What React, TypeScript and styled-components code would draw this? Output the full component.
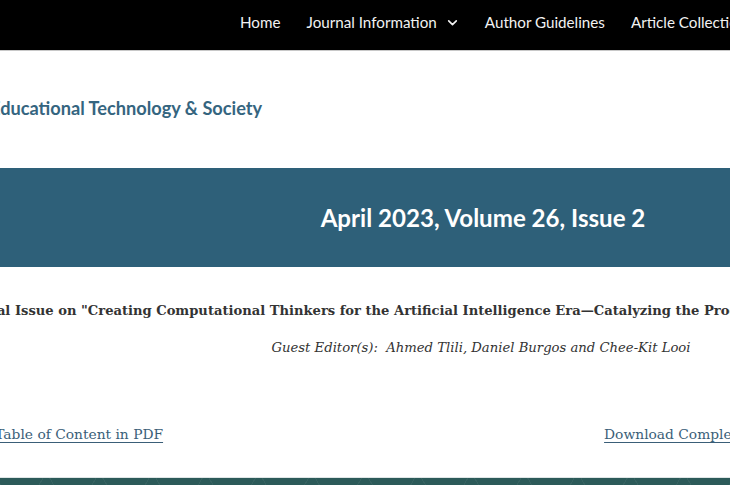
import styled, { createGlobalStyle } from 'styled-components';

const navItems = ['Home', 'Journal Information', 'Author Guidelines', 'Article Collections', 'Archives'];

const GlobalStyle = createGlobalStyle`
  html, body {
    margin: 0;
    padding: 0;
    background: #ffffff;
    overflow: hidden;
  }
  body {
    width: 730px;
    height: 485px;
  }
`;

const Page = styled.div`
  width: 730px;
  height: 485px;
  overflow: hidden;
  display: flex;
  flex-direction: column;
`;

const NavBar = styled.nav`
  flex-shrink: 0;
  height: 51px;
  box-sizing: border-box;
  padding: 0 0 6px 240px;
  background: #000000;
  border-bottom: 1px solid #c8c8c8;
  display: flex;
  align-items: center;
  gap: 26px;
  white-space: nowrap;
`;

const NavLink = styled.a`
  display: inline-flex;
  align-items: center;
  gap: 9px;
  color: #f2f2f2;
  font-family: Lato, "Open Sans", sans-serif;
  font-size: 15.2px;
  text-decoration: none;
  flex-shrink: 0;
`;

const Chevron = styled.svg`
  width: 13px;
  height: 13px;
  margin-top: 1px;
`;

const Masthead = styled.header`
  flex-shrink: 0;
  height: 117px;
  box-sizing: border-box;
  padding-bottom: 3px;
  display: flex;
  align-items: center;
  white-space: nowrap;
`;

const Logo = styled.div`
  margin-left: -10px;
  color: #35657f;
  font-family: Lato, "Open Sans", sans-serif;
  font-weight: 700;
  font-size: 18.2px;
`;

const Banner = styled.section`
  flex-shrink: 0;
  height: 99px;
  background: #2e6079;
  display: flex;
  align-items: center;
  justify-content: center;
  padding-left: 236px;
`;

const IssueTitle = styled.h1`
  margin: 0;
  color: #ffffff;
  font-family: Lato, "Open Sans", sans-serif;
  font-weight: 700;
  font-size: 24.1px;
  white-space: nowrap;
`;

const Main = styled.main`
  flex: 1;
  width: 1060px;
  margin-left: -48px;
  display: flex;
  flex-direction: column;
  white-space: nowrap;
`;

const SpecialTitle = styled.h2`
  margin: 36px 0 0 5px;
  color: #333333;
  font-family: "DejaVu Serif", serif;
  font-weight: 700;
  font-size: 13.1px;
`;

const Editors = styled.p`
  margin: 22px 0 0;
  padding-right: 2px;
  text-align: center;
  color: #333333;
  font-family: "DejaVu Serif", serif;
  font-style: italic;
  font-size: 13.2px;
`;

const LinkRow = styled.div`
  margin: 71px 0 0 -31px;
  display: flex;
  gap: 441px;
`;

const DocLink = styled.a`
  color: #3a5e78;
  font-family: "DejaVu Serif", serif;
  font-size: 13.8px;
  text-decoration: underline;
  text-underline-offset: 3px;
`;

const Footer = styled.footer`
  flex-shrink: 0;
  height: 7px;
  border-top: 1px solid #dfe6e6;
  background:
    repeating-linear-gradient(60deg, rgba(255, 255, 255, 0.05) 0 1px, transparent 1px 46px),
    repeating-linear-gradient(-60deg, rgba(255, 255, 255, 0.05) 0 1px, transparent 1px 46px),
    #2c5a59;
`;

export default function App() {
  return (
    <>
      <GlobalStyle />
      <Page>
        <NavBar>
          {navItems.map((item) => (
            <NavLink key={item} href="#">
              {item}
              {item === 'Journal Information' && (
                <Chevron viewBox="0 0 24 24" fill="none" stroke="currentColor" strokeWidth="3" strokeLinecap="round" strokeLinejoin="round">
                  <path d="M5 9l7 7 7-7" />
                </Chevron>
              )}
            </NavLink>
          ))}
        </NavBar>

        <Masthead>
          <Logo>Educational Technology &amp; Society</Logo>
        </Masthead>

        <Banner>
          <IssueTitle>April 2023, Volume 26, Issue 2</IssueTitle>
        </Banner>

        <Main>
          <SpecialTitle>
            Special Issue on "Creating Computational Thinkers for the Artificial Intelligence Era—Catalyzing the Process of Learning"
          </SpecialTitle>
          <Editors>
            Guest Editor(s):&nbsp; Ahmed Tlili, Daniel Burgos and Chee-Kit Looi
          </Editors>
          <LinkRow>
            <DocLink href="#">Download Table of Content in PDF</DocLink>
            <DocLink href="#">Download Complete Issue in PDF</DocLink>
          </LinkRow>
        </Main>

        <Footer />
      </Page>
    </>
  );
}
